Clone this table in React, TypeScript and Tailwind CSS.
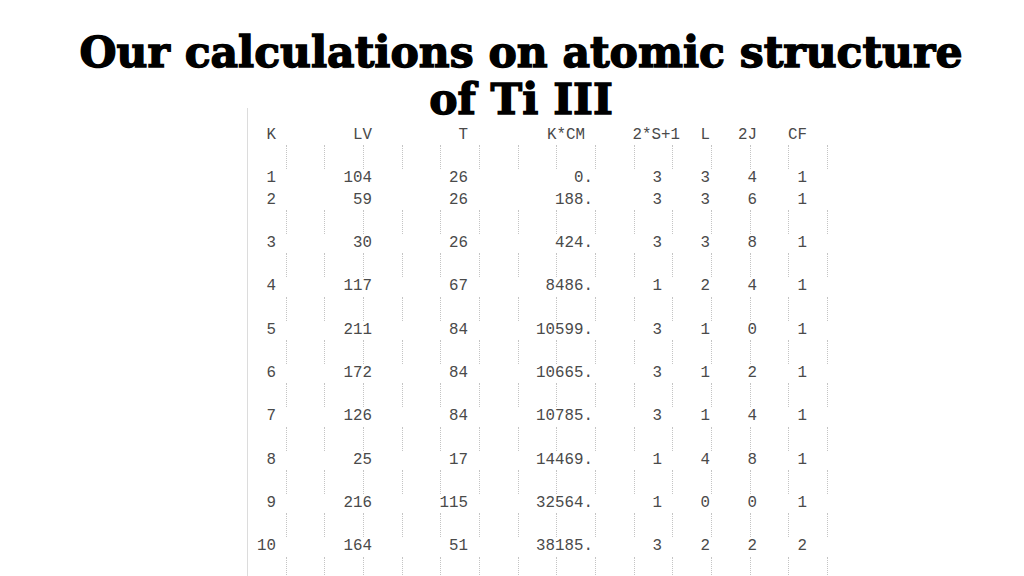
import React from "react";

const rows: string[][] = [
  ["1", "104", "26", "0.", "3", "3", "4", "1"],
  ["2", "59", "26", "188.", "3", "3", "6", "1"],
  ["3", "30", "26", "424.", "3", "3", "8", "1"],
  ["4", "117", "67", "8486.", "1", "2", "4", "1"],
  ["5", "211", "84", "10599.", "3", "1", "0", "1"],
  ["6", "172", "84", "10665.", "3", "1", "2", "1"],
  ["7", "126", "84", "10785.", "3", "1", "4", "1"],
  ["8", "25", "17", "14469.", "1", "4", "8", "1"],
  ["9", "216", "115", "32564.", "1", "0", "0", "1"],
  ["10", "164", "51", "38185.", "3", "2", "2", "2"],
];

const colW = ["w-[28px]", "w-[96px]", "w-[96px]", "w-[125px]", "w-[69px]", "w-[48px]", "w-[47px]", "w-[50px]"];
const headW = ["w-[28px]", "w-[96px]", "w-[96px]", "w-[117px]", "w-[95px]", "w-[30px]", "w-[47px]", "w-[50px]"];
const heads = ["K", "LV", "T", "K*CM", "2*S+1", "L", "2J", "CF"];

function Blank() {
  return (
    <div className="flex h-[21.68px]">
      {Array.from({ length: 15 }).map((_, i) => (
        <div key={i} className="w-[38.67px] h-[24px] -mt-[1px] shrink-0 border-r border-dotted border-[#c4c4c4]" />
      ))}
    </div>
  );
}

function Line({ cells, widths }: { cells: string[]; widths: string[] }) {
  return (
    <div className="flex h-[21.68px] items-center pt-[1px]">
      {cells.map((c, i) => (
        <div key={i} className={`${widths[i]} shrink-0 text-right whitespace-pre`}>
          {c}
        </div>
      ))}
    </div>
  );
}

export default function App() {
  return (
    <div className="w-[1024px] h-[576px] overflow-hidden bg-white">
      <div
        className="pt-[29px] pl-[18px] text-center text-black text-[42.5px] leading-[46.6px] font-bold [-webkit-text-stroke:1.4px_black]"
        style={{ fontFamily: '"DejaVu Serif", serif' }}
      >
        <div>Our calculations on atomic structure</div>
        <div>of Ti III</div>
      </div>
      <div
        className="-mt-[14px] ml-[247px] w-[600px] border-l border-[#dcdcdc] pt-[16px] text-[15.8px] text-[#4a4a4a]"
        style={{ fontFamily: '"Liberation Mono", "Courier New", monospace' }}
      >
        <Line cells={heads} widths={headW} />
        <Blank />
        <Line cells={rows[0]} widths={colW} />
        {rows.slice(1).map((r, i) => (
          <React.Fragment key={i}>
            {i > 0 && <Blank />}
            <Line cells={r} widths={colW} />
          </React.Fragment>
        ))}
        <Blank />
      </div>
    </div>
  );
}
